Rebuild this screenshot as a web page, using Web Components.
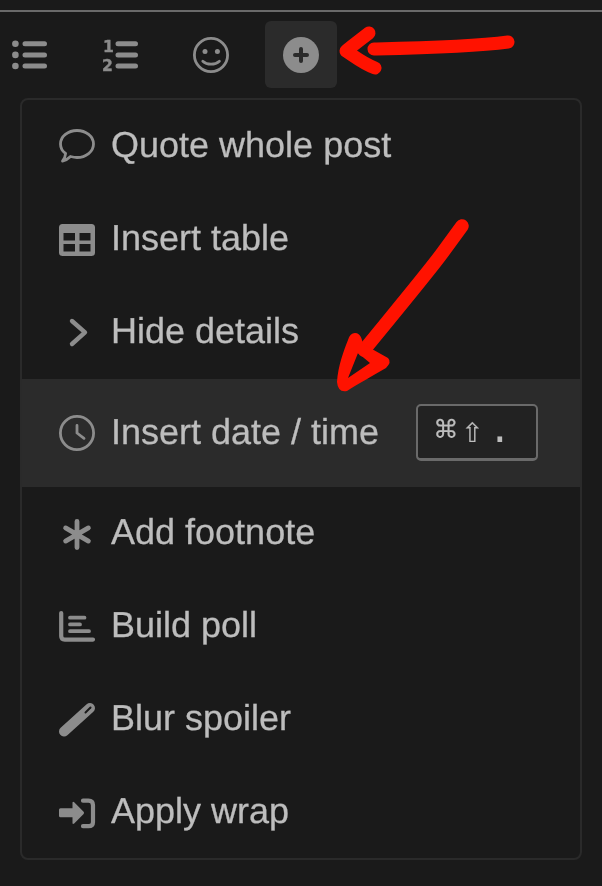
<!DOCTYPE html>
<html>
<head>
<meta charset="utf-8">
<title>Composer menu</title>
<style>
html, body { margin: 0; padding: 0; height: 100%; background: #1a1a1a; }
body { font-family: "Liberation Sans", Arial, sans-serif; overflow: hidden; }
</style>
</head>
<body>
<composer-page>
	<tool-bar>
		<tool-button icon="list"></tool-button>
		<tool-button icon="numlist"></tool-button>
		<tool-button icon="smile"></tool-button>
		<tool-button icon="plus" active></tool-button>
	</tool-bar>
	<popup-menu>
		<menu-item icon="quote">Quote whole post</menu-item>
		<menu-item icon="table">Insert table</menu-item>
		<menu-item icon="chevron">Hide details</menu-item>
		<menu-item icon="clock" active>Insert date / time<key-hint slot="hint">⌘⇧ .</key-hint></menu-item>
		<menu-item icon="asterisk">Add footnote</menu-item>
		<menu-item icon="poll">Build poll</menu-item>
		<menu-item icon="pen">Blur spoiler</menu-item>
		<menu-item icon="wrap">Apply wrap</menu-item>
	</popup-menu>
	<red-arrows></red-arrows>
</composer-page>

<script>
// icons are drawn on a 36x36 box, stroke and fill come from currentColor
const ICONS = {
	list: `<g fill="currentColor"><circle cx="3.4" cy="6.7" r="3.3"/><circle cx="3.4" cy="17.9" r="3.3"/><circle cx="3.4" cy="29" r="3.3"/></g>
		<g stroke="currentColor" stroke-width="5" stroke-linecap="round"><path d="M13 6.7H32.5M13 17.9H32.5M13 29H32.5"/></g>`,
	numlist: `<g fill="currentColor" stroke="currentColor" stroke-width=".4" font-family="'DejaVu Sans',sans-serif" font-weight="700" font-size="15.6"><text x="1" y="15">1</text><text x="0" y="33.6">2</text></g>
		<g stroke="currentColor" stroke-width="5" stroke-linecap="round"><path d="M16 6.7H33.5M16 17.9H33.5M16 29H33.5"/></g>`,
	smile: `<circle cx="18" cy="18" r="16.6" fill="none" stroke="currentColor" stroke-width="2.8"/>
		<circle cx="12" cy="14.6" r="2.5" fill="currentColor"/><circle cx="24.4" cy="14.6" r="2.5" fill="currentColor"/>
		<path d="M9.8 24.2C14 28.2 22 28.2 26.4 24.2" fill="none" stroke="currentColor" stroke-width="2.8" stroke-linecap="round"/>`,
	plus: `<circle cx="18" cy="18" r="18" fill="#8c8c8c"/><path d="M18 12V24M12 18H24" stroke="#2b2b2b" stroke-width="4" stroke-linecap="round"/>`,
	quote: `<path d="M3.5 33C5 31 6.5 28.5 6.6 25.5C3 23 1.5 19.8 1.5 16C1.5 8.5 9 2.5 18 2.5C27 2.5 34.5 8.5 34.5 16C34.5 23.5 27 29.5 18 29.5C15.5 29.5 13.5 29 11.5 28.5C9.5 30.5 6.5 32.5 3.5 33Z" fill="none" stroke="currentColor" stroke-width="2.8" stroke-linejoin="round"/>`,
	table: `<path fill="currentColor" fill-rule="evenodd" d="M3.5 3H32.5Q36 3 36 6.5V31.5Q36 35 32.5 35H3.5Q0 35 0 31.5V6.5Q0 3 3.5 3ZM4.5 12V19.5H16V12ZM20.5 12V19.5H31.5V12ZM4.5 23V30.5H16V23ZM20.5 23V30.5H31.5V23Z"/>`,
	chevron: `<path d="M13 7L26 18.3L13 30" fill="none" stroke="currentColor" stroke-width="4.4" stroke-linecap="round" stroke-linejoin="round"/>`,
	clock: `<circle cx="18" cy="18" r="16.6" fill="none" stroke="currentColor" stroke-width="2.8"/><path d="M18 10.5V18L25 23.3" fill="none" stroke="currentColor" stroke-width="2.8" stroke-linecap="round" stroke-linejoin="round"/>`,
	asterisk: `<path d="M18 6.5V32.5M6.6 12.9L29.4 26.1M29.4 12.9L6.6 26.1" stroke="currentColor" stroke-width="4.8" stroke-linecap="round"/>`,
	poll: `<path d="M2.2 5V28Q2.2 31.6 5.8 31.6H34" fill="none" stroke="currentColor" stroke-width="4.2" stroke-linecap="round"/>
		<path d="M11 9.7H25.5M11 16.4H21M11 23.2H30" stroke="currentColor" stroke-width="3.8" stroke-linecap="round"/>`,
	pen: `<path d="M31 7L5 30.5" stroke="currentColor" stroke-width="10" stroke-linecap="round"/><path d="M31.5 6.5L26.5 11.5" stroke="#1a1a1a" stroke-width="2" stroke-linecap="round"/>`,
	wrap: `<g transform="translate(0 1.2)"><path fill="currentColor" d="M1.5 13H13.5V7.6Q13.5 6 15.2 7L24.6 16.6Q25.6 17.7 24.6 18.8L15.2 28.4Q13.5 29.4 13.5 27.8V22H1.5Q0 22 0 20.5V14.5Q0 13 1.5 13Z"/>
		<path d="M24 5.5H29.5Q34 5.5 34 10V27Q34 31 29.5 31H24" fill="none" stroke="currentColor" stroke-width="4.2" stroke-linecap="round"/></g>`
};
const svgIcon = name => `<svg viewBox="0 0 36 36" width="36" height="36" overflow="visible">${ICONS[name]}</svg>`;

// page column: the thin rule on top, then its children in flow
class ComposerPage extends HTMLElement {
	constructor() { super();
		this.attachShadow({mode: 'open'}).innerHTML = `
<style>
:host { display: block; position: relative; height: 886px; padding-top: 10px; box-sizing: border-box; }
.rule { height: 2px; background: #6a6a6a; }
</style>
<div class="rule"></div>
<slot></slot>`;
	}
}

class ToolBar extends HTMLElement {
	constructor() { super();
		this.attachShadow({mode: 'open'}).innerHTML = `
<style>
:host { display: flex; gap: 18.4px; height: 67px; margin: 9px 0 10px -6px; }
</style>
<slot></slot>`;
	}
}

class ToolButton extends HTMLElement {
	constructor() { super();
		const root = this.attachShadow({mode: 'open'});
		root.innerHTML = `
<style>
:host { display: flex; align-items: center; justify-content: center; width: 72px; height: 67px; border-radius: 6px; color: #8c8c8c; }
:host([active]) { background: #2b2b2b; }
svg { display: block; will-change: opacity; }
</style>
${svgIcon(this.getAttribute('icon'))}`;
	}
}

class PopupMenu extends HTMLElement {
	constructor() { super();
		this.attachShadow({mode: 'open'}).innerHTML = `
<style>
:host { display: flex; flex-direction: column; width: 562px; height: 762px; box-sizing: border-box; margin-left: 20px; border: 2px solid #2a2a2a; border-radius: 8px; background: #1a1a1a; overflow: hidden; }
</style>
<slot></slot>`;
	}
}

class MenuItem extends HTMLElement {
	constructor() { super();
		const root = this.attachShadow({mode: 'open'});
		root.innerHTML = `
<style>
:host { display: flex; align-items: center; flex: 1 1 0; padding: 0 42px 0 37px; gap: 16px; color: #bdbdbd; font-size: 36px; white-space: nowrap; text-rendering: geometricPrecision; }
:host([active]) { flex: 0 0 108px; background: #2b2b2b; }
svg { display: block; flex: none; color: #8c8c8c; }
/* own layer: greyscale text edges like the reference */
.label { flex: 1; margin-top: -2px; will-change: opacity; -webkit-text-stroke: .3px #bdbdbd; }
</style>
${svgIcon(this.getAttribute('icon'))}
<span class="label"><slot></slot></span>
<slot name="hint"></slot>`;
	}
}

class KeyHint extends HTMLElement {
	constructor() { super();
		this.attachShadow({mode: 'open'}).innerHTML = `
<style>
:host { display: block; width: 122px; height: 57px; box-sizing: border-box; padding-left: 17px; border: 2px solid #6a6a6a; border-bottom-width: 3px; border-radius: 5px; background: #222; }
span { display: block; color: #bdbdbd; font: 36px/50px "DejaVu Sans Mono", monospace; letter-spacing: 4.8px; word-spacing: -25.5px; will-change: opacity; -webkit-text-stroke: .2px #bdbdbd; }
</style>
<span><slot></slot></span>`;
	}
}

// hand drawn annotations lying over the screenshot
class RedArrows extends HTMLElement {
	constructor() { super();
		this.attachShadow({mode: 'open'}).innerHTML = `
<style>
:host { position: absolute; left: 0; top: 0; width: 602px; height: 886px; pointer-events: none; }
svg { display: block; }
</style>
<svg viewBox="0 0 602 886" width="602" height="886">
	<g fill="none" stroke="#ff1200" stroke-linecap="round" stroke-linejoin="round">
		<path d="M369 33C360 40 352 46 346 51C354 56 362 63 375 68" stroke-width="13"/>
		<path d="M374 49C420 48 470 47 508 42" stroke-width="13"/>
		<path d="M462 226L443 252C430 270 395 312 364 350" stroke-width="13.5"/>
	</g>
	<path fill="#ff1200" fill-rule="evenodd" d="M355 333C361 333 362 340 363 344L388 358Q392 362 386 368C372 376 358 384 347 391Q338 393 337 382C338 366 344 350 348 340Q350 333 355 333ZM358 353L348 378L370 363Z"/>
</svg>`;
	}
}

customElements.define('composer-page', ComposerPage);
customElements.define('tool-bar', ToolBar);
customElements.define('tool-button', ToolButton);
customElements.define('popup-menu', PopupMenu);
customElements.define('menu-item', MenuItem);
customElements.define('key-hint', KeyHint);
customElements.define('red-arrows', RedArrows);
</script>
</body>
</html>
